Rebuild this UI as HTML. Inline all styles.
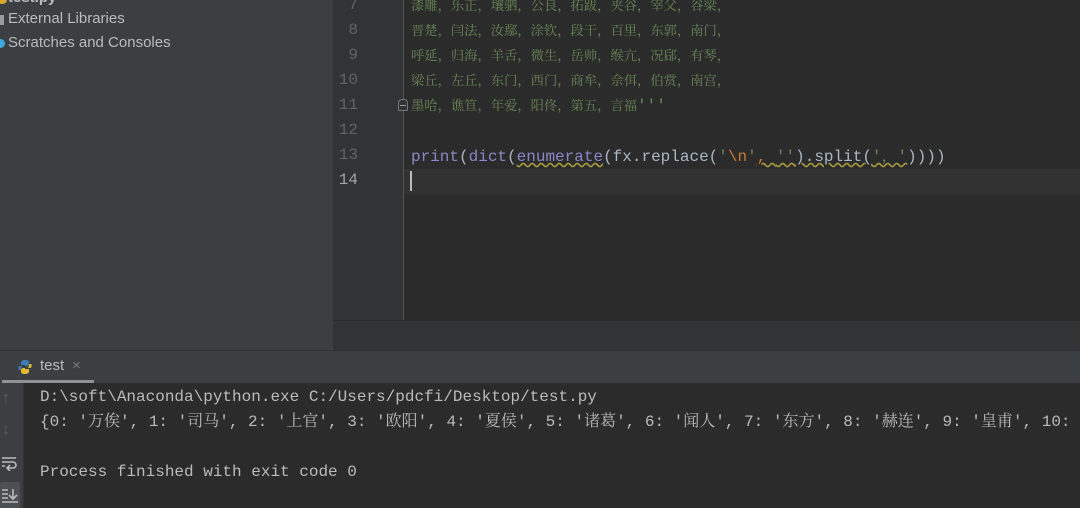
<!DOCTYPE html>
<html><head><meta charset="utf-8"><style>
*{margin:0;padding:0;box-sizing:border-box}
body{width:1080px;height:508px;overflow:hidden;background:#2b2b2b;position:relative;font-family:"Liberation Sans","Noto Sans CJK SC",sans-serif}
.abs{position:absolute}
.mono{font-family:"Liberation Mono","Noto Serif CJK SC",monospace;font-size:16px;white-space:pre}
.cjk{font-family:"Noto Serif CJK SC","Noto Sans CJK SC",serif;font-size:13.3px;color:#6a8759;white-space:pre}
.ln{position:absolute;left:333px;width:25px;text-align:right;color:#606366}
</style></head><body>
<div class="abs" style="left:0;top:0;width:333px;height:350px;background:#3c3f41"></div>
<div class="abs" style="left:0;top:-11px;width:60px;height:18px;color:#bbb;font-size:15px;font-weight:bold;padding-left:8px">test.py</div>
<div class="abs" style="left:-3px;top:-4px;width:10px;height:8px;border-radius:50%;background:#d9a62e"></div>
<div class="abs" style="left:0;top:15px;width:4px;height:10px;background:#9a9a9a"></div>
<div class="abs" style="left:8px;top:10px;color:#bbb;font-size:15px">External Libraries</div>
<div class="abs" style="left:-4px;top:39px;width:9px;height:9px;border-radius:50%;background:#3fa9e0"></div>
<div class="abs" style="left:8px;top:34px;color:#bbb;font-size:15px">Scratches and Consoles</div>

<div class="abs" style="left:333px;top:0;width:70px;height:320px;background:#313335"></div>
<div class="abs" style="left:403px;top:0;width:1px;height:320px;background:#555"></div>
<div class="abs" style="left:404px;top:169px;width:676px;height:25px;background:#323232"></div>
<div class="abs" style="left:333px;top:320px;width:747px;height:30px;background:#313335;border-top:1px solid #2a2a2a"></div>

<div class="mono">
<div class="ln" style="top:-4px">7</div>
<div class="ln" style="top:21px">8</div>
<div class="ln" style="top:46px">9</div>
<div class="ln" style="top:71px">10</div>
<div class="ln" style="top:96px">11</div>
<div class="ln" style="top:121px">12</div>
<div class="ln" style="top:146px">13</div>
<div class="ln" style="top:171px;color:#a4a3a3">14</div>
</div>
<div class="abs" style="left:398px;top:99px;width:10px;height:12px;border:1px solid #777;border-radius:4px 4px 1px 1px;background:#313335"></div>
<div class="abs" style="left:400px;top:105px;width:6px;height:1px;background:#999"></div>

<div class="abs cjk" style="left:411px;top:-5px">漆雕，乐正，壤驷，公良，拓跋，夹谷，宰父，谷梁，</div>
<div class="abs cjk" style="left:411px;top:20px">晋楚，闫法，汝鄢，涂钦，段干，百里，东郭，南门，</div>
<div class="abs cjk" style="left:411px;top:45px">呼延，归海，羊舌，微生，岳帅，缑亢，况郈，有琴，</div>
<div class="abs cjk" style="left:411px;top:70px">梁丘，左丘，东门，西门，商牟，佘佴，伯赏，南宫，</div>
<div class="abs cjk" style="left:411px;top:95px">墨哈，谯笪，年爱，阳佟，第五，言福<span class="mono" style="font-size:16px">'''</span></div>

<div class="abs mono" style="left:411px;top:143px;color:#a9b7c6"><span style="color:#8888c6">print</span>(<span style="color:#8888c6">dict</span>(<span style="color:#8888c6;text-decoration:underline wavy #a89a3f">enumerate</span>(fx.replace(<span style="color:#6a8759">'<span style="color:#cc7832">\n</span>'</span><span style="text-decoration:underline wavy #a89a3f"><span style="color:#cc7832">, </span><span style="color:#6a8759">''</span>).split(<span style="color:#6a8759">'，'</span></span>))))</div>
<div class="abs" style="left:410px;top:171px;width:2px;height:20px;background:#bbb"></div>

<div class="abs" style="left:0;top:350px;width:1080px;height:33px;background:#3c3f41;border-top:1px solid #2f3133"></div>
<div class="abs" style="left:17px;top:359px;width:16px;height:16px">
<svg width="16" height="16" viewBox="0 0 16 16"><path d="M8 1C4 1 4 3 4 4v2h4v1H3C1 7 1 10 2 11h2V9c0-1 1-2 2-2h4c1 0 2-1 2-2V3c0-1-1-2-4-2z" fill="#3d7ab3"/><path d="M8 15c4 0 4-2 4-3v-2H8V9h5c2 0 2-3 1-4h-2v2c0 1-1 2-2 2H6c-1 0-2 1-2 2v2c0 1 1 2 4 2z" fill="#e2b932"/></svg></div>
<div class="abs" style="left:40px;top:357px;color:#bbb;font-size:15px">test</div>
<div class="abs" style="left:72px;top:357px;color:#7a7a7a;font-size:15px">×</div>
<div class="abs" style="left:2px;top:380px;width:92px;height:3px;background:#8e9297"></div>

<div class="abs" style="left:0;top:383px;width:24px;height:125px;background:#3c3f41;border-right:1px solid #323232"></div>
<div class="abs" style="left:2px;top:390px;color:#5c5f61;font-size:16px">↑</div>
<div class="abs" style="left:2px;top:421px;color:#5c5f61;font-size:16px">↓</div>
<svg class="abs" style="left:1px;top:455px" width="16" height="16" viewBox="0 0 16 16"><path d="M1 3h14M1 7h11a3 3 0 0 1 0 6H7M1 11h3M9 10l-3 3 3 3" stroke="#bbb" stroke-width="1.6" fill="none"/></svg>
<div class="abs" style="left:0;top:482px;width:20px;height:26px;background:#4c5052;border-radius:2px"></div>
<svg class="abs" style="left:1px;top:486px" width="18" height="18" viewBox="0 0 18 18"><path d="M1 4h6M1 8h6M1 12h6M1 16h16M12 3v10M8 9l4 4 4-4" stroke="#bbb" stroke-width="1.6" fill="none"/></svg>

<div class="abs mono" style="left:40px;top:385px;color:#bbb;line-height:25px">D:\soft\Anaconda\python.exe C:/Users/pdcfi/Desktop/test.py
{0: '万俟', 1: '司马', 2: '上官', 3: '欧阳', 4: '夏侯', 5: '诸葛', 6: '闻人', 7: '东方', 8: '赫连', 9: '皇甫', 10: '尉迟'

Process finished with exit code 0</div>
</body></html>
